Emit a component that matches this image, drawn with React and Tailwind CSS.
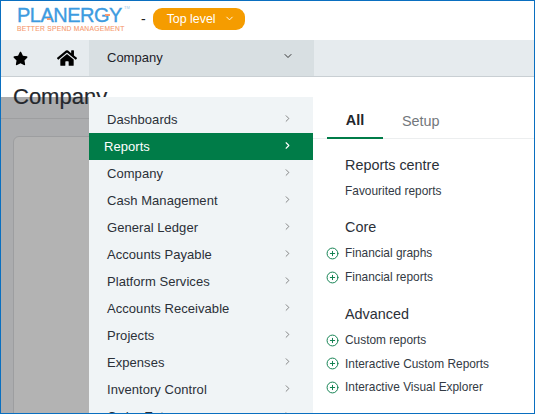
import { ChevronDown, ChevronRight, CirclePlus } from "lucide-react";
import { FaStar, FaHome } from "react-icons/fa";

const font = { fontFamily: '"Liberation Sans", Arial, sans-serif' };

const menuItems = [
  "Dashboards",
  "Reports",
  "Company",
  "Cash Management",
  "General Ledger",
  "Accounts Payable",
  "Platform Services",
  "Accounts Receivable",
  "Projects",
  "Expenses",
  "Inventory Control",
  "Order Entry",
];

function PlusLink({ label }) {
  return (
    <div className="-ml-[1px] flex items-center gap-[6px] text-[11.9px] leading-[14px] text-[#333a44]">
      <CirclePlus size={13} strokeWidth={1.8} className="text-[#0f7f4f]" />
      <span>{label}</span>
    </div>
  );
}

function Heading({ children, className = "" }) {
  return <h4 className={`ml-[18px] text-[14.4px] leading-[16px] font-normal text-[#2b3038] ${className}`}>{children}</h4>;
}

export default function App() {
  return (
    <div style={font} className="relative h-[414px] w-[535px] overflow-hidden border border-[#0a6fc0] bg-white">
      <header className="flex h-[39px] items-center pl-[16px] pb-[3px]">
        <div className="relative w-[112px]">
          <div className="text-[20px] leading-[19px] font-normal tracking-[-0.5px] text-[#3d9be0] [-webkit-text-stroke:0.35px_#3d9be0]">PLANERGY</div>
          <div className="text-[6.7px] leading-[8px] font-normal tracking-[0.28px] text-[#f79a6e] whitespace-nowrap [-webkit-text-stroke:0.1px_#f79a6e]">BETTER SPEND MANAGEMENT</div>
          <span className="absolute left-[107px] top-[-1px] text-[4px] leading-[5px] text-[#9cc8e8]">TM</span>
          <span className="absolute left-[30px] top-[12px] h-[2px] w-[4px] bg-[#f79a6e]" />
          <span className="absolute left-[88px] top-[8px] h-[2px] w-[5px] bg-[#f79a6e]" />
        </div>
        <span className="ml-[12px] text-[14px] text-[#222]">-</span>
        <button className="ml-[7px] flex h-[22px] w-[92px] items-center rounded-[9px] bg-[#f59c00] pl-[14px] text-[12.4px] text-white">
          Top level
          <ChevronDown size={11} strokeWidth={2} className="ml-[8px] -mt-[2px]" />
        </button>
      </header>

      <nav className="flex h-[37px] border-b border-[#c9cfd3] bg-[#e6ebee]">
        <div className="flex w-[44px] items-center justify-start pl-[12px]">
          <FaStar size={15} className="text-black" />
        </div>
        <div className="flex w-[44px] items-center justify-center">
          <FaHome size={20} className="text-black" />
        </div>
        <div className="flex w-[225px] items-center justify-between bg-[#d8dfe2] pl-[18px] pr-[20px] text-[13px] text-[#1d2229]">
          Company
          <ChevronDown size={12} strokeWidth={1.8} className="-mt-[4px] text-[#222]" />
        </div>
      </nav>

      {/* modal backdrop over the page */}
      <div className="absolute inset-x-0 bottom-0 top-[96px] bg-[#abacae]">
        <div className="mt-[21px] border-t border-[#9d9ea0]" />
        <div className="ml-[12px] mt-[17px] h-[300px] rounded-tl-[6px] border border-[#9d9ea0] bg-[#b3b3b3]" />
      </div>

      <main className="relative">
        <h1 className="ml-[12px] mt-[7px] text-[22px] leading-[26px] font-normal text-[#24272c] [-webkit-text-stroke:0.2px_#24272c]">Company</h1>
      </main>

      {/* dropdown with the section list and its links */}
      <div className="absolute bottom-0 left-[88px] right-0 top-[96px] flex">
        <div className="w-[224px] overflow-hidden bg-[#f0f4f6] pt-[9px]">
          {menuItems.map((item) => {
            const active = item === "Reports";
            return (
              <div
                key={item}
                className={
                  active
                    ? "flex h-[27px] items-center justify-between bg-[#007c48] pl-[15px] pr-[20px] text-[13px] tracking-[0.05px] text-white"
                    : "flex h-[27px] items-center justify-between pl-[18px] pr-[20px] text-[13px] tracking-[0.05px] text-[#2b3038]"
                }
              >
                {item}
                <ChevronRight size={11} strokeWidth={active ? 2.4 : 1.7} className={active ? "-mt-[2px] text-white" : "-mt-[2px] text-[#666]"} />
              </div>
            );
          })}
        </div>

        <div className="flex-1 bg-white pt-[8px]">
          <div className="flex h-[34px] border-b border-[#eceeef] pl-[14px] text-[14.4px]">
            <div className="flex h-[34px] w-[56px] items-center justify-center border-b-2 border-[#007c48] font-bold text-[#22262c]">All</div>
            <div className="flex h-[33px] items-center pl-[19px] text-[#73777c]">Setup</div>
          </div>
          <div className="pl-[14px]">
            <Heading className="mt-[18px]">Reports centre</Heading>
            <div className="ml-[18px] mt-[11px] text-[11.9px] leading-[14px] text-[#333a44]">Favourited reports</div>
            <Heading className="mt-[21px]">Core</Heading>
            <div className="mt-[11px] flex flex-col gap-[10px]">
              <PlusLink label="Financial graphs" />
              <PlusLink label="Financial reports" />
            </div>
            <Heading className="mt-[22px]">Advanced</Heading>
            <div className="mt-[11px] flex flex-col gap-[9.5px]">
              <PlusLink label="Custom reports" />
              <PlusLink label="Interactive Custom Reports" />
              <PlusLink label="Interactive Visual Explorer" />
            </div>
          </div>
        </div>
      </div>
    </div>
  );
}
